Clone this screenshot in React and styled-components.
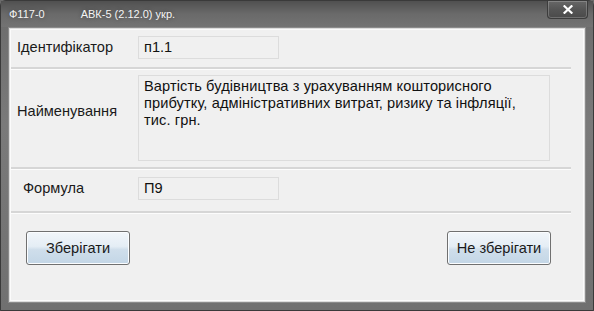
import React from 'react';
import styled, {createGlobalStyle} from 'styled-components';

let Global = createGlobalStyle`
  html, body { margin: 0; padding: 0; background: #6a6a6a; }
  body { font-family: "Liberation Sans", Arial, sans-serif; }
`;

let Window = styled.div`
  width: 594px;
  height: 311px;
  box-sizing: border-box;
  display: flex;
  flex-direction: column;
  background: linear-gradient(180deg, #4f4f4f 0%, #6e6e6e 8%, #7a7a7a 40%, #707070 100%);
  border: 1px solid #3a3a3a;
  border-radius: 6px 6px 0 0;
`;

let TitleBar = styled.div`
  height: 26px;
  display: flex;
  align-items: flex-start;
  padding: 0 5px 0 8px;
  color: #f4f4f4;
  font-size: 11px;
  background: linear-gradient(180deg, #505050 0%, #6a6a6a 50%, #737373 100%);
`;

let TitleText = styled.span`
  margin-top: 7px;
  margin-right: ${p => p.gap || 0}px;
  text-shadow: 0 0 4px rgba(0,0,0,0.4);
`;

let CloseButton = styled.div`
  margin-left: auto;
  width: 41px;
  height: 18px;
  box-sizing: border-box;
  border: 1px solid #3c3c3c;
  border-top: none;
  border-radius: 0 0 4px 4px;
  background: linear-gradient(180deg, #676767 0%, #555 50%, #4a4a4a 100%);
  box-shadow: inset 0 0 0 1px rgba(255,255,255,0.2);
  display: flex;
  align-items: center;
  justify-content: center;
`;

let Client = styled.div`
  flex: 1;
  margin: 0 7px 7px 7px;
  border: 1px solid #8a8a8a;
  background: #f0f0f0;
  padding: 1px;
  display: flex;
`;

let Panel = styled.div`
  flex: 1;
  border: 1px solid #fbfbfb;
  outline: 1px solid #dcdcdc;
  display: flex;
  flex-direction: column;
  padding-right: 12px;
`;

let Row = styled.div`
  display: flex;
  align-items: flex-start;
  box-sizing: border-box;
  height: ${p => p.h}px;
  padding-top: ${p => p.top}px;
  border-bottom: 2px solid #d6d6d6;
  box-shadow: 0 1px 0 #fcfcfc;
`;

let Label = styled.div`
  width: 127px;
  padding-left: ${p => p.indent || 6}px;
  margin-top: ${p => p.offset || 0}px;
  box-sizing: border-box;
  font-size: 14.6px;
  line-height: ${p => p.lh || 23}px;
  color: #1a1a1a;
`;

let Field = styled.div`
  width: ${p => p.w}px;
  height: ${p => p.h}px;
  box-sizing: border-box;
  border: 1px solid #dcdcdc;
  background: #f0f0f0;
  font-size: 14.6px;
  letter-spacing: ${p => p.multi ? 0.1 : 0}px;
  color: #111;
  padding: ${p => p.multi ? '2px 5px' : '0 5px'};
  line-height: ${p => p.multi ? 17 : 21}px;
  white-space: ${p => p.multi ? 'pre-line' : 'nowrap'};
`;

let ButtonBar = styled.div`
  display: flex;
  justify-content: space-between;
  padding: 18px 20px 0 15px;
`;

let Button = styled.div`
  width: 104px;
  height: 34px;
  box-sizing: border-box;
  border: 1px solid #707070;
  border-radius: 3px;
  background: linear-gradient(180deg, #f2f6fa 0%, #e4edf5 45%, #cfdeeb 55%, #c3d6e6 100%);
  box-shadow: inset 0 0 0 1px #fbfdff;
  display: flex;
  align-items: center;
  justify-content: center;
  font-size: 14.6px;
  color: #1a1a1a;
`;

let nameText = 'Вартість будівництва з урахуванням кошторисного\nприбутку, адміністративних витрат, ризику та інфляції,\nтис. грн.';

export default function App() {
  return (
    <>
      <Global />
      <Window>
        <TitleBar>
          <TitleText gap={36}>Ф117-0</TitleText>
          <TitleText>АВК-5 (2.12.0) укр.</TitleText>
          <CloseButton>
            <svg width="10" height="9" viewBox="0 0 10 9">
              <path d="M1.5 1.2 L8.5 7.8 M8.5 1.2 L1.5 7.8" stroke="#fff" strokeWidth="2.2" strokeLinecap="square" />
            </svg>
          </CloseButton>
        </TitleBar>
        <Client>
          <Panel>
            <Row h={39} top={6}>
              <Label>Ідентифікатор</Label>
              <Field w={141} h={23}>п1.1</Field>
            </Row>
            <Row h={100} top={6}>
              <Label offset={28} lh={17}>Найменування</Label>
              <Field w={412} h={86} multi>{nameText}</Field>
            </Row>
            <Row h={44} top={8}>
              <Label indent={12}>Формула</Label>
              <Field w={141} h={23}>П9</Field>
            </Row>
            <ButtonBar>
              <Button>Зберігати</Button>
              <Button>Не зберігати</Button>
            </ButtonBar>
          </Panel>
        </Client>
      </Window>
    </>
  );
}
